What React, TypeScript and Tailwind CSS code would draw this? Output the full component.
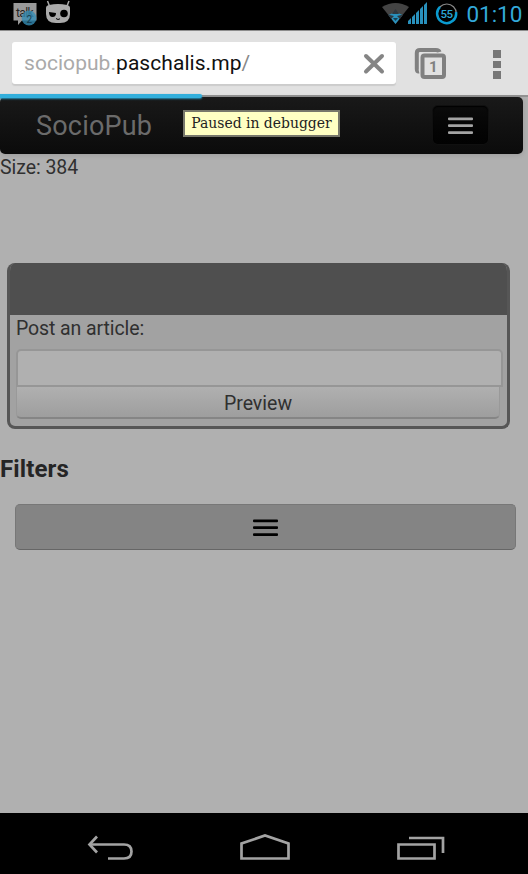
import React from "react";

function StatusBar() {
  return (
    <header className="flex h-[30px] shrink-0 justify-between bg-black">
      <svg width="80" height="30" viewBox="0 0 80 30">
        <path d="M13.500 3H36.500V20.500H22L18 25V20.500H13.500Z" fill="#999" />
        <text x="16" y="16.500" fontSize="12" fontFamily="Roboto, sans-serif" fill="#222" textLength="17.500">talk</text>
        <circle cx="29" cy="18" r="7.400" fill="#348cb4" fillOpacity="0.8" />
        <text x="26.500" y="22.500" fontSize="10" fontFamily="Roboto, sans-serif" fill="#153b4d">2</text>
        <path d="M47.500 1L49.500 6M69 1L67 6" stroke="#aaa" strokeWidth="1.500" />
        <path d="M49 5Q58 3 67 5Q70 5.500 70 8V14Q70 23 60 23H56Q46 23 46 14V8Q46 5.500 49 5Z" fill="#aaa" />
        <path d="M49 12L56 13Q56 17 52.500 17T49 12Z" fill="#000" />
        <circle cx="64" cy="13.500" r="3.800" fill="#000" />
        <path d="M56 18.500L58 19.500L60 18.800" stroke="#000" fill="none" />
      </svg>
      <div className="flex">
        <svg width="78" height="30" viewBox="380 0 78 30">
          <path d="M382 7Q395.500-1 409 7L395.500 24Z" fill="#444" />
          <path d="M388.500 15Q395.500 11 402.500 15L395.500 24Z" fill="#2991bd" />
          <path d="M395.500 9L399 14H392ZM391 19L388 14.500L394 16ZM400 19L403 14.500L397 16Z" fill="#303940" />
          <path d="M393 18H398L395.500 21Z" fill="#173f51" />
          <path d="M408 24V21L411 18V24ZM412 24V17L415 14V24ZM416 24V13L419 10V24ZM420 24V9L423 6V24ZM424 24V5L427 2V24Z" fill="#2991bd" />
          <circle cx="446.800" cy="13.500" r="9.500" fill="none" stroke="#888" strokeWidth="1.200" />
          <path d="M440 6.800A9.500 9.500 0 1 0 456 12" fill="none" stroke="#0a9bd0" strokeWidth="2.500" />
          <text x="440.500" y="17.500" fontSize="11.500" fontWeight="500" fontFamily="Roboto, sans-serif" fill="#2da6d5" textLength="12.500">55</text>
        </svg>
        <span className="w-[70px] pl-[8.500px] font-[Roboto,sans-serif] text-[22.500px] leading-[28px] tracking-[-0.050px] text-[#33a9da]">01:10</span>
      </div>
    </header>
  );
}

function AddressBar() {
  return (
    <div className="relative flex h-[67px] shrink-0 items-start border-t border-[#8d8d8d] bg-[#e1e1e1] pl-[12px] pt-[11px] shadow-[inset_0_-2px_0_#929292]">
      <div className="flex h-[42px] w-[384px] justify-between rounded-[3px] bg-white pl-[12px] shadow-[0_2px_1px_#ccc]">
        <span className="whitespace-nowrap font-[Roboto,sans-serif] text-[21px] leading-[43px] tracking-[0.050px] text-[#aaa]">
          sociopub.<span className="text-[#111]">paschalis.mp</span><span className="text-[#888]">/</span>
        </span>
        <svg className="mr-[11px] mt-[11px]" width="22" height="22" viewBox="0 0 22 22">
          <path d="M3 3L19 18.500M19 3L3 18.500" stroke="#858585" strokeWidth="4" strokeLinecap="round" />
        </svg>
      </div>
      <svg className="ml-[18px] mt-[5px]" width="34" height="34" viewBox="414 47 34 34">
        <path d="M419 71.500Q416.800 72 416.800 69V53Q416.800 50 420 50H436Q439 50 439.500 52" fill="none" stroke="#808080" strokeWidth="4" />
        <rect x="422.500" y="55.500" width="21.500" height="21.500" rx="2" fill="#e1e1e1" stroke="#808080" strokeWidth="4" />
        <text x="429" y="71.500" fontSize="15" fontWeight="700" fontFamily="Roboto, sans-serif" fill="#808080">1</text>
      </svg>
      <div className="ml-[45px] mt-[8px] flex flex-col gap-[3px]">
        <i className="size-[7.500px] bg-[#777]" />
        <i className="size-[7.500px] bg-[#777]" />
        <i className="size-[7.500px] bg-[#777]" />
      </div>
      <div className="absolute left-0 top-[63px] z-10 h-[4px] w-[202px] rounded-r-[2px] bg-[#33afdc] shadow-[0_1px_2px_#258db3]" />
    </div>
  );
}

function Bars({ color }: { color: string }) {
  return (
    <svg className="mt-px" width="25" height="18" viewBox="0 0 25 18">
      <rect y="0.500" width="25" height="2.800" rx="1" fill={color} />
      <rect y="7.300" width="25" height="2.800" rx="1" fill={color} />
      <rect y="14.300" width="25" height="2.800" rx="1" fill={color} />
    </svg>
  );
}

function NavBar() {
  return (
    <nav className="relative flex h-[57px] w-[523px] shrink-0 items-start justify-between rounded-[5px] bg-linear-to-b from-[#191919] to-[#0b0b0b] pl-[36px] pr-[35px] shadow-[0_1px_5px_#00000020]">
      <span className="font-[Roboto,sans-serif] text-[27px] leading-[58px] tracking-[0.200px] text-[#6b6b6b]">SocioPub</span>
      <button className="mt-[9px] flex h-[38px] w-[55px] items-center justify-center rounded-[5px] bg-linear-to-b from-[#0b0b0b] to-[#020202] shadow-[0_0_0_1px_#101010,inset_0_1px_1px_#000]">
        <Bars color="#a4a4a4" />
      </button>
      <div className="absolute left-[183px] top-[13px] flex h-[27px] w-[157px] items-center justify-center border-2 border-[#77776b] bg-[#ffffc3]">
        <span className="whitespace-nowrap font-['DejaVu_Serif_Condensed','DejaVu_Serif',serif] text-[15.500px] text-[#222]">Paused in debugger</span>
      </div>
    </nav>
  );
}

function ArticleForm() {
  return (
    <section className="ml-[7px] mt-[82px] flex h-[166px] w-[503px] shrink-0 flex-col overflow-hidden rounded-[8px] border-[3px] border-t-0 border-[#565656] bg-[#a2a2a2]">
      <div className="h-[52px] shrink-0 bg-[#4f4f4f]" />
      <label className="h-[34px] shrink-0 pl-[6px] font-[Roboto,sans-serif] text-[19.500px] leading-[28px] tracking-[-0.100px] text-[#303030]">Post an article:</label>
      <div className="ml-[6px] h-[38px] w-[487px] shrink-0 rounded-t-[5px] border-2 border-[#969696] bg-[#b0b0b0]" />
      <button className="ml-[6px] h-[32px] w-[484px] shrink-0 rounded-b-[5px] border border-t-0 border-b-2 border-[#999] border-b-[#858585] bg-linear-to-b from-[#b0b0b0] to-[#9e9e9e] pt-[2px] font-[Roboto,sans-serif] text-[19.500px] leading-[30px] text-[#303030]">Preview</button>
    </section>
  );
}

function SystemNavigation() {
  return (
    <footer className="h-[61px] shrink-0 bg-black">
      <svg width="528" height="61" viewBox="0 813 528 61" fill="none" stroke="#a3a3a3" strokeWidth="2.700">
        <path d="M89 844.500H124Q131.500 844.500 131.500 851.500T124 858.500H108" />
        <path d="M97 836.500L89.500 844.500L97 852.500" />
        <path d="M241.500 858.500V843.500L265 835.500L288.500 843.500V858.500Z" />
        <path d="M398.500 844.500H434.500V858.500H398.500ZM409 838H443V853" />
      </svg>
    </footer>
  );
}

export default function App() {
  return (
    <div className="flex h-[874px] w-[528px] flex-col overflow-hidden bg-[#b0b0b0]">
      <StatusBar />
      <AddressBar />
      <main className="flex min-h-0 flex-1 flex-col">
        <NavBar />
        <p className="h-[27px] shrink-0 font-[Roboto,sans-serif] text-[19.500px] leading-[28px] tracking-[-0.050px] text-[#303030]">Size: 384</p>
        <ArticleForm />
        <h2 className="mt-[23px] h-[34px] shrink-0 font-[Roboto,sans-serif] text-[24px] font-bold leading-[34px] tracking-[0.130px] text-[#252525]">Filters</h2>
        <button className="ml-[15px] mt-[18px] flex h-[46px] w-[501px] shrink-0 items-center justify-center rounded-[5px] border border-[#777] border-b-[#666] bg-[#848484]">
          <Bars color="#000" />
        </button>
      </main>
      <SystemNavigation />
    </div>
  );
}
